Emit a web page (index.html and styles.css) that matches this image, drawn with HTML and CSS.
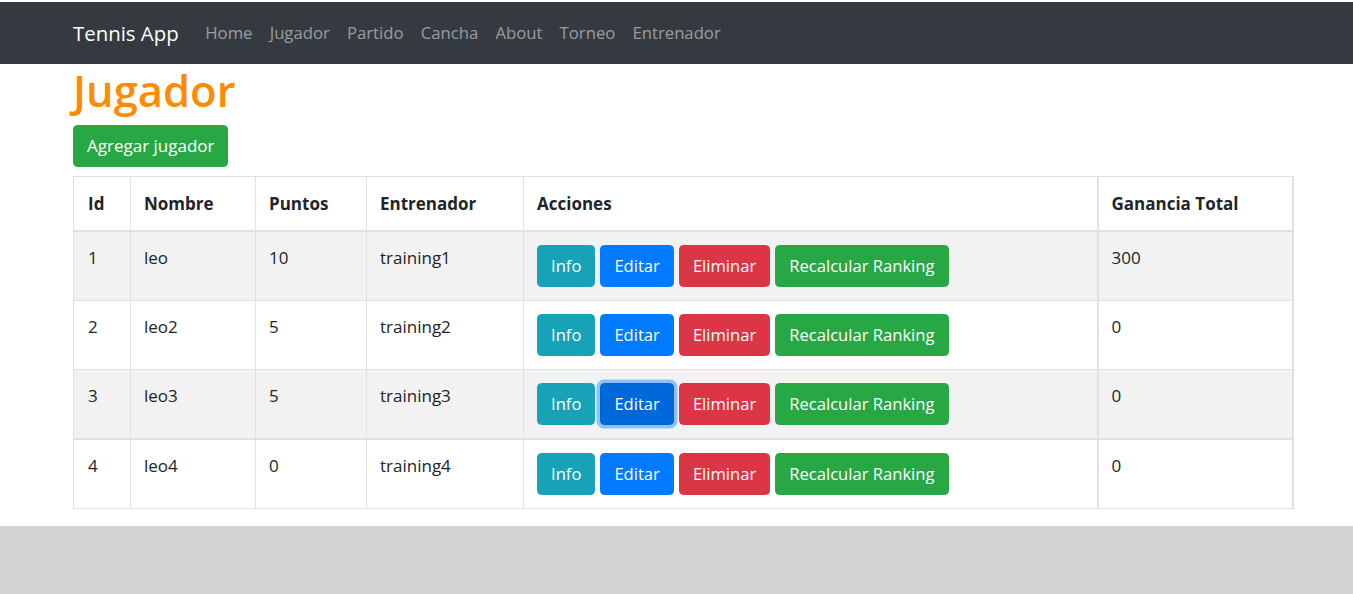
FILE: index.html
```html
<!DOCTYPE html>
<html lang="es">
<head>
<meta charset="utf-8">
<title>Tennis App</title>
<link rel="stylesheet" href="styles.css">
</head>
<body>
<nav class="navbar">
  <a class="brand" href="#">Tennis App</a>
  <ul class="nav-links">
    <li><a href="#">Home</a></li>
    <li><a href="#">Jugador</a></li>
    <li><a href="#">Partido</a></li>
    <li><a href="#">Cancha</a></li>
    <li><a href="#">About</a></li>
    <li><a href="#">Torneo</a></li>
    <li><a href="#">Entrenador</a></li>
  </ul>
</nav>
<main class="container">
  <h1 class="title">Jugador</h1>
  <button class="btn btn-success add-btn">Agregar jugador</button>
  <table class="table">
    <colgroup>
      <col class="c-id"><col class="c-name"><col class="c-pts"><col class="c-coach"><col class="c-actions"><col class="c-total-col">
    </colgroup>
    <thead>
      <tr>
        <th>Id</th>
        <th>Nombre</th>
        <th>Puntos</th>
        <th>Entrenador</th>
        <th>Acciones</th>
        <th class="c-total">Ganancia Total</th>
      </tr>
    </thead>
    <tbody>
      <tr class="striped">
        <td>1</td><td>leo</td><td>10</td><td>training1</td>
        <td><div class="actions"><button class="btn btn-info">Info</button><button class="btn btn-primary">Editar</button><button class="btn btn-danger">Eliminar</button><button class="btn btn-success">Recalcular Ranking</button></div></td>
        <td class="c-total">300</td>
      </tr>
      <tr>
        <td>2</td><td>leo2</td><td>5</td><td>training2</td>
        <td><div class="actions"><button class="btn btn-info">Info</button><button class="btn btn-primary">Editar</button><button class="btn btn-danger">Eliminar</button><button class="btn btn-success">Recalcular Ranking</button></div></td>
        <td class="c-total">0</td>
      </tr>
      <tr class="striped thick-bottom">
        <td>3</td><td>leo3</td><td>5</td><td>training3</td>
        <td><div class="actions"><button class="btn btn-info">Info</button><button class="btn btn-primary focused">Editar</button><button class="btn btn-danger">Eliminar</button><button class="btn btn-success">Recalcular Ranking</button></div></td>
        <td class="c-total">0</td>
      </tr>
      <tr>
        <td>4</td><td>leo4</td><td>0</td><td>training4</td>
        <td><div class="actions"><button class="btn btn-info">Info</button><button class="btn btn-primary">Editar</button><button class="btn btn-danger">Eliminar</button><button class="btn btn-success">Recalcular Ranking</button></div></td>
        <td class="c-total">0</td>
      </tr>
    </tbody>
  </table>
</main>
</body>
</html>
```
FILE: styles.css
```css
html {
  background: #d3d3d3;
}
body {
  margin: 0;
  padding-top: 2px;
  background: #fff;
  font-family: "Open Sans", "Noto Sans", sans-serif;
  font-size: 17px;
  line-height: 26.4px;
  color: #212529;
}
.navbar {
  display: flex;
  align-items: center;
  height: 62px;
  background: #343a40;
  padding: 0 0 0 73px;
}
.brand {
  color: #fff;
  text-decoration: none;
  font-size: 20.4px;
  margin-right: 18px;
}
.nav-links {
  display: flex;
  list-style: none;
  margin: 0;
  padding: 0;
  font-size: 16.7px;
}
.nav-links a {
  display: block;
  padding: 0 8.6px;
  color: rgba(255, 255, 255, 0.5);
  text-decoration: none;
}
.container {
  margin-left: 73px;
  width: 1220px;
  padding-bottom: 17px;
}
.title {
  margin: 0 0 8px;
  font-size: 43.5px;
  line-height: 53px;
  font-weight: 600;
  color: #ff8c00;
}
.btn {
  font-family: inherit;
  font-size: 16.6px;
  line-height: 26.4px;
  height: 42px;
  padding: 0 13px;
  border: 1px solid transparent;
  border-radius: 4.4px;
  color: #fff;
  cursor: pointer;
}
.btn-success { background: #28a745; border-color: #28a745; }
.btn-info { background: #17a2b8; border-color: #17a2b8; }
.btn-primary { background: #007bff; border-color: #007bff; }
.btn-danger { background: #dc3545; border-color: #dc3545; }
.btn-primary.focused {
  background: #0069d9;
  border-color: #0062cc;
  box-shadow: 0 0 0 3.5px rgba(38, 143, 255, 0.5);
}
.add-btn {
  display: block;
  margin-bottom: 9px;
  font-size: 17px;
}
.table {
  width: 1219px;
  border-collapse: collapse;
  table-layout: fixed;
}
.c-id { width: 57px; }
.c-name { width: 125px; }
.c-pts { width: 111px; }
.c-coach { width: 157px; }
.c-actions { width: 574px; }
.c-total-col { width: 195px; }
.table th,
.table td {
  border: 1px solid #dee2e6;
  padding: 13.5px 13px 13.5px;
  text-align: left;
  vertical-align: top;
  white-space: nowrap;
}
.table th {
  font-weight: 700;
  border-bottom-width: 2px;
}
.table td {
  padding-top: 13px;
  padding-bottom: 13px;
}
.table th:first-child,
.table td:first-child {
  padding-left: 14px;
}
.table .c-total {
  border-left-width: 2px;
  border-right-width: 2px;
}
.striped td {
  background: #f2f2f2;
}
.thick-bottom td {
  border-bottom-width: 2px;
}
.actions {
  display: flex;
  gap: 5px;
}
```
